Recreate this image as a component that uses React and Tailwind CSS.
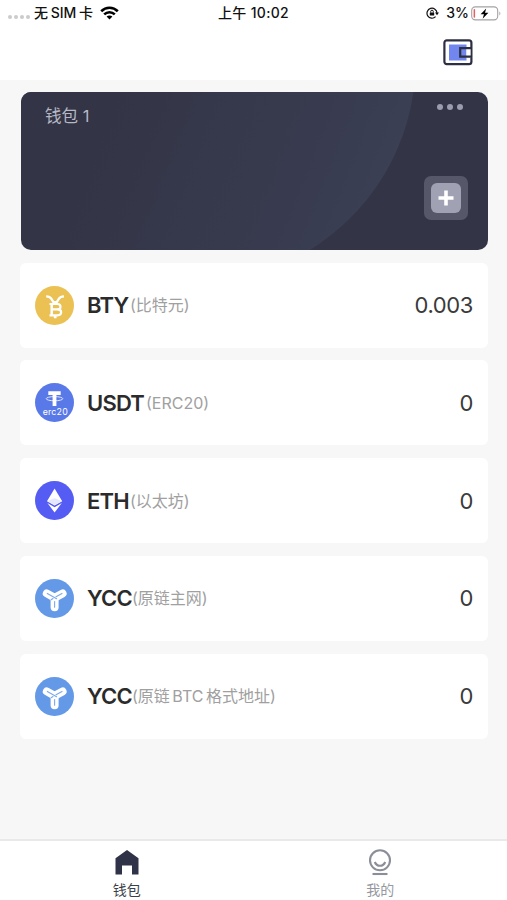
const TEXT = "font-['Inter','Noto_Sans_CJK_SC',sans-serif]";

function Wifi() {
  return (
    <svg width="19" height="14" viewBox="0 0 19 14" fill="none" stroke="#000" strokeWidth="2.6">
      <path d="M1.2 5.2C5.9.6 13.1.6 17.8 5.2" />
      <path d="M4.2 8.4c3-2.9 7.6-2.9 10.6 0" />
      <path d="M6.6 10.6c1.7-1.5 4.1-1.5 5.8 0L9.5 13.6z" fill="#000" stroke="none" />
    </svg>
  );
}

function RotationLock() {
  return (
    <svg width="13" height="12" viewBox="0 0 13 12" fill="none" stroke="#111" strokeWidth="1.2">
      <path d="M9.6 9.7A5 5 0 1 1 11 6" />
      <path d="M9 5.6h4L11 8.3z" fill="#111" stroke="none" />
      <rect x="3.8" y="5.4" width="4.4" height="3.2" rx=".5" fill="#111" stroke="none" />
      <path d="M4.7 5.6V4.5a1.3 1.3 0 0 1 2.6 0v1.1" strokeWidth="1" />
    </svg>
  );
}

function Battery() {
  return (
    <svg width="30" height="15" viewBox="0 0 30 15" fill="none">
      <rect x=".7" y=".9" width="26" height="13" rx="3.6" stroke="#a3a3a3" strokeWidth="1.1" />
      <path d="M28.4 5.6c1.3.6 1.3 3.2 0 3.8z" fill="#a3a3a3" />
      <rect x="2.6" y="3.1" width="1.5" height="8.6" rx=".7" fill="#e85f5f" />
      <path d="M15.2 2.4 9.6 8.2h3.4l-1.4 4.6 5.8-6h-3.4z" fill="#000" />
    </svg>
  );
}

function WalletIcon() {
  return (
    <svg width="30" height="27" viewBox="0 0 30 27" fill="none">
      <rect x="1.4" y="1.4" width="27" height="23.8" rx="2.4" stroke="#2c2f42" strokeWidth="2.2" />
      <rect x="6" y="5.5" width="17.5" height="16" fill="#7187ef" />
      <path d="M23.5 8h4v11h-4z" fill="#fff" />
      <path d="M28.4 9.1H17.2v8.6h11.2" stroke="#2c2f42" strokeWidth="2.2" />
    </svg>
  );
}

function BtyIcon() {
  return (
    <svg className="size-[39px] shrink-0" viewBox="0 0 39 39" fill="none">
      <circle cx="19.5" cy="19.5" r="19.5" fill="#ebc154" />
      <g stroke="#fff">
        <path d="M11.2 10.4c2.6 0 4.2.8 5.2 2.5l2 3.3h3.4l2-3.3c1-1.700 2.6-2.5 5.2-2.5" strokeWidth="2.300" />
        <path d="M14.500 18h8c4 0 4 5.400 0 5.400h-6" strokeWidth="2.2" />
        <path d="M22.500 23.400c4.900 0 4.900 5.900 0 5.900h-8" strokeWidth="2.2" />
        <path d="M16.700 17V30" strokeWidth="2.500" />
        <path d="M20.200 29v3.300" strokeWidth="2.700" />
      </g>
    </svg>
  );
}

function UsdtIcon() {
  return (
    <svg className="size-[39px] shrink-0" viewBox="0 0 39 39" fill="none">
      <circle cx="19.5" cy="19.5" r="19.5" fill="#5979e8" />
      <ellipse cx="19.5" cy="15.7" rx="8.3" ry="2.1" stroke="#dce4ff" strokeWidth="1" />
      <path d="M13.3 8.2h12.4v3.7h-4.3v11h-3.8v-11h-4.3z" fill="#fff" />
      <text x="20.2" y="31.7" textAnchor="middle" fontSize="8.8" textLength="25" fill="#fff" fontFamily="Inter, sans-serif">erc20</text>
    </svg>
  );
}

function EthIcon() {
  return (
    <svg className="size-[39px] shrink-0" viewBox="0 0 39 39">
      <circle cx="19.5" cy="19.5" r="19.5" fill="#545cf3" />
      <path d="M19.6 7.6 12 20.3l7.6 4.2 7.6-4.2z" fill="#fff" />
      <path d="m12.4 22.1 7.2 4.1 7.2-4.1-7.2 9.4z" fill="#fff" />
      <path d="m12.4 20.1 7.2-2.9 7.2 2.9-7.2 4z" fill="#e5e7ff" />
    </svg>
  );
}

function YccIcon() {
  return (
    <svg className="size-[39px] shrink-0" viewBox="0 0 39 39" fill="none" strokeLinecap="round" strokeLinejoin="round">
      <circle cx="19.5" cy="19.5" r="19.5" fill="#6499e8" />
      <g stroke="#fff" strokeWidth="8">
        <path d="m11.800 14.400 7.700 4.400" />
        <path d="m27.600 14.400-7.900 4.400" />
        <path d="M19.600 19.500v8.700" />
      </g>
      <g stroke="#7ba9ed" strokeWidth="1.100">
        <path d="m12.300 14.400 9.300 5.300" />
        <path d="m27 14.400-6 3.400" />
        <path d="m18 19.600-1.900 1.100" />
        <path d="M19.600 22.500v5.800" />
      </g>
    </svg>
  );
}

const coins = [
  { Icon: BtyIcon, code: "BTY", note: "(比特元)", amount: "0.003", codeWidth: "w-[43px]" },
  { Icon: UsdtIcon, code: "USDT", note: "(ERC20)", amount: "0", codeWidth: "w-[59px]" },
  { Icon: EthIcon, code: "ETH", note: "(以太坊)", amount: "0", codeWidth: "w-[43px]" },
  { Icon: YccIcon, code: "YCC", note: "(原链主网)", amount: "0", codeWidth: "w-[45px]" },
  { Icon: YccIcon, code: "YCC", note: "(原链 BTC 格式地址)", amount: "0", codeWidth: "w-[45px]" },
];

function CoinRow({ coin }) {
  const { Icon, code, note, amount, codeWidth } = coin;
  return (
    <li className="flex h-[85px] items-center rounded-md bg-white pr-[15px] pl-[15px]">
      <Icon />
      <span className={`ml-[13px] text-[22px] leading-[30px] font-semibold tracking-[-0.8px] whitespace-nowrap text-[#2b2b2b] ${codeWidth}`}>{code}</span>
      <span className="text-[16px] leading-[30px] whitespace-nowrap text-[#a0a0a0] [word-spacing:-2px]">{note}</span>
      <span className="ml-auto text-[22px] leading-[30px] tracking-[-0.4px] text-[#3a3a3a]">{amount}</span>
    </li>
  );
}

export default function App() {
  return (
    <div className={`flex h-[900px] w-[507px] flex-col overflow-hidden bg-[#f7f7f8] ${TEXT}`}>
      <header className="h-20 shrink-0 bg-white">
        <div className="grid h-[26px] grid-cols-3 items-center text-[14px] leading-5 font-medium text-[#111]">
          <div className="flex items-center pl-2">
            <div className="mt-2 flex gap-[2px]">
              {[0, 1, 2, 3].map((n) => <i key={n} className="size-[4px] rounded-full bg-[#cbcbcb]" />)}
            </div>
            <span className="mr-[7px] ml-[4px] whitespace-nowrap [word-spacing:-1px]">无 SIM 卡</span>
            <Wifi />
          </div>
          <div className="text-center tracking-[0.3px]">上午 10:02</div>
          <div className="flex items-center justify-end pr-[6px]">
            <RotationLock />
            <span className="mr-[2px] ml-[7px]">3%</span>
            <Battery />
          </div>
        </div>
        <div className="flex justify-end pt-[13px] pr-[34px]"><WalletIcon /></div>
      </header>

      <main className="flex flex-1 flex-col px-5 pt-[11.5px]">
        <section className="ml-[0.5px] grid h-[158.5px] w-[467px] shrink-0 overflow-hidden rounded-[10px] bg-[#333546]">
          <svg className="col-start-1 row-start-1" width="467" height="159" viewBox="0 0 467 159">
            <defs>
              <linearGradient id="sheen" gradientUnits="userSpaceOnUse" x1="80" y1="20" x2="360" y2="130">
                <stop offset="0" stopColor="#333546" />
                <stop offset=".55" stopColor="#37394d" />
                <stop offset="1" stopColor="#3b4054" />
              </linearGradient>
            </defs>
            <circle cx="173" cy="-31" r="221.5" fill="url(#sheen)" />
          </svg>
          <div className="col-start-1 row-start-1 flex justify-between pr-5 pl-[24.5px]">
            <h1 className="pt-[12px] text-[16.5px] leading-6 font-normal text-[#b7b8c5]">钱包 1</h1>
            <div className="flex flex-col items-end">
              <div className="mt-[12px] mr-[4.5px] flex gap-[3.5px]">
                {[0, 1, 2].map((n) => <i key={n} className="size-[6.5px] rounded-full bg-[#9b9dad]" />)}
              </div>
              <button className="mt-[66px] flex size-11 items-center justify-center rounded-[7px] bg-[#565869]">
                <span className="flex size-[30px] items-center justify-center rounded-[6px] bg-[#a0a1b3]">
                  <svg width="16" height="16" viewBox="0 0 16 16" stroke="#fff" strokeWidth="3.6"><path d="M8 .5v15M.5 8h15" /></svg>
                </span>
              </button>
            </div>
          </div>
        </section>
        <ul className="mt-[12.5px] flex w-[468px] flex-col gap-[12.8px]">
          {coins.map((coin) => <CoinRow key={coin.note} coin={coin} />)}
        </ul>
      </main>

      <nav className="grid h-[61px] shrink-0 grid-cols-2 border-t-2 border-[#e9e9e9] bg-white text-[14px] leading-5">
        <a className="flex flex-col items-center pt-[9px] text-[#3c3e49]">
          <svg width="24" height="25" viewBox="0 0 24 25"><path d="M12 0 23.5 8.3V24.5H17v-9H7v9H.5V8.3z" fill="#303347" /></svg>
          <span className="mt-[5px]">钱包</span>
        </a>
        <a className="flex flex-col items-center pt-[8px] text-[#96989f]">
          <svg width="24" height="27" viewBox="0 0 24 27" fill="none" stroke="#8b8e98" strokeWidth="2.1">
            <circle cx="12" cy="11.3" r="10" />
            <path d="M6.8 13c2 5 8.4 5 10.4 0" />
            <path d="M4.5 25h15" />
          </svg>
          <span className="mt-[4px]">我的</span>
        </a>
      </nav>
    </div>
  );
}
